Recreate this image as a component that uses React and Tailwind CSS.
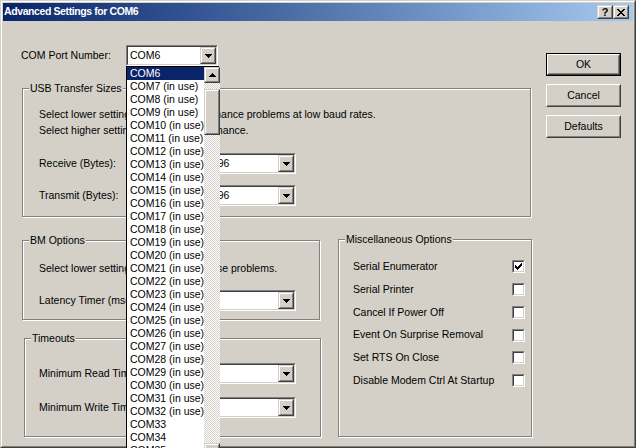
import React from 'react';

// pixel glyphs, one row per entry: [x, length] spans
const ARROW_DOWN = [[[0, 7]], [[1, 5]], [[2, 3]], [[3, 1]]];
const ARROW_UP = [[[3, 1]], [[2, 3]], [[1, 5]], [[0, 7]]];
const CHECK = [[[6, 1]], [[5, 2]], [[0, 1], [4, 3]], [[0, 2], [3, 3]], [[0, 5]], [[1, 3]], [[2, 1]]];
const CLOSE = [
  [[0, 2], [6, 2]],
  [[1, 2], [5, 2]],
  [[2, 4]],
  [[3, 2]],
  [[2, 4]],
  [[1, 2], [5, 2]],
  [[0, 2], [6, 2]],
];

function Pixels({ w, h, rows }) {
  return (
    <svg width={w} height={h} viewBox={`0 0 ${w} ${h}`} shapeRendering="crispEdges" className="block">
      {rows.map((spans, y) =>
        spans.map(([x, len]) => <rect key={`${y}-${x}`} x={x} y={y} width={len} height="1" fill="#000" />)
      )}
    </svg>
  );
}

// scrollbar / caption / combo arrow bevel
function Bevel({ className = '', children }) {
  return (
    <div className={`border border-t-[#d4d0c8] border-l-[#d4d0c8] border-r-[#404040] border-b-[#404040] bg-[#d4d0c8] ${className}`}>
      <div className="w-full h-full border border-t-white border-l-white border-r-[#808080] border-b-[#808080] flex items-center justify-center">
        {children}
      </div>
    </div>
  );
}

function Sunken({ className = '', children }) {
  return (
    <div className={`border border-t-[#808080] border-l-[#808080] border-r-white border-b-white ${className}`}>
      <div className="w-full h-full border border-t-[#404040] border-l-[#404040] border-r-[#d4d0c8] border-b-[#d4d0c8] bg-white">
        {children}
      </div>
    </div>
  );
}

function Combo({ value, className = '' }) {
  return (
    <Sunken className={`h-[21px] shrink-0 ${className}`}>
      <div className="h-full flex items-center">
        <span className="flex-1 pl-[2px] whitespace-nowrap overflow-hidden leading-[13px]">{value}</span>
        <Bevel className="w-[16px] h-[17px] shrink-0">
          <Pixels w={7} h={4} rows={ARROW_DOWN} />
        </Bevel>
      </div>
    </Sunken>
  );
}

function Check({ checked }) {
  return (
    <Sunken className="w-[13px] h-[13px] shrink-0">
      <div className="w-full h-full flex items-center justify-center">
        {checked && <Pixels w={7} h={7} rows={CHECK} />}
      </div>
    </Sunken>
  );
}

function PushButton({ label, isDefault }) {
  if (isDefault) {
    return (
      <div className="w-[75px] h-[23px] border border-black">
        <div className="w-full h-full border border-t-white border-l-white border-r-[#404040] border-b-[#404040]">
          <div className="w-full h-full border border-t-[#d4d0c8] border-l-[#d4d0c8] border-r-[#808080] border-b-[#808080] flex items-center justify-center">
            {label}
          </div>
        </div>
      </div>
    );
  }
  return (
    <div className="w-[75px] h-[23px] border border-t-white border-l-white border-r-[#404040] border-b-[#404040]">
      <div className="w-full h-full border border-t-[#d4d0c8] border-l-[#d4d0c8] border-r-[#808080] border-b-[#808080] flex items-center justify-center">
        {label}
      </div>
    </div>
  );
}

function Group({ title, className = '', children }) {
  return (
    <div className={`relative shrink-0 border border-[#808080] shadow-[inset_1px_1px_0_#fff,1px_1px_0_#fff] ${className}`}>
      <span className="absolute -top-[7px] left-[6px] px-[1px] bg-[#d4d0c8] leading-[13px] whitespace-nowrap">{title}</span>
      {children}
    </div>
  );
}

function FieldRow({ label, value, className = '' }) {
  return (
    <div className={`flex items-center h-[21px] ${className}`}>
      <span className="w-[163px] shrink-0 whitespace-nowrap">{label}</span>
      <Combo value={value} className="w-[94px]" />
    </div>
  );
}

const ports = [
  'COM6',
  ...Array.from({ length: 26 }, (_, i) => `COM${i + 7} (in use)`),
  'COM33',
  'COM34',
  'COM35',
  'COM36',
];

const misc = [
  ['Serial Enumerator', true, 'h-[23px]'],
  ['Serial Printer', false, 'h-[23px]'],
  ['Cancel If Power Off', false, 'h-[23px]'],
  ['Event On Surprise Removal', false, 'h-[22px]'],
  ['Set RTS On Close', false, 'h-[23px]'],
  ['Disable Modem Ctrl At Startup', false, 'h-[23px]'],
];

export default function App() {
  return (
    <div className="w-[636px] h-[448px] relative overflow-hidden bg-[#d4d0c8] text-black text-[10.5px] font-['Liberation_Sans',Arial,sans-serif]">
      {/* window frame */}
      <div className="h-full border border-t-[#d4d0c8] border-l-[#d4d0c8] border-r-[#404040] border-b-[#404040]">
        <div className="h-full border border-t-white border-l-white border-r-[#808080] border-b-[#808080]">
          <div className="h-full p-[1px] flex flex-col">
            {/* title bar */}
            <div className="h-[18px] shrink-0 flex items-center pl-[1px] pr-[4px] bg-linear-to-r from-[#0a246a] to-[#a6caf0]">
              <span className="flex-1 text-white font-bold text-[10.5px] tracking-[-0.4px] whitespace-nowrap">
                Advanced Settings for COM6
              </span>
              <Bevel className="w-[16px] h-[14px]">
                <span className="font-bold text-[11px] leading-[10px]">?</span>
              </Bevel>
              <Bevel className="w-[16px] h-[14px]">
                <Pixels w={8} h={7} rows={CLOSE} />
              </Bevel>
            </div>

            {/* body */}
            <div className="flex-1 flex pl-[18px]">
              <div className="w-[511px] shrink-0 flex flex-col">
                <div className="mt-[24px] h-[21px] flex items-center">
                  <span className="w-[105px] shrink-0">COM Port Number:</span>
                  <Combo value="COM6" className="w-[92px]" />
                </div>

                <Group title="USB Transfer Sizes" className="mt-[22px] ml-[1px] w-[509px] h-[129px] pt-[17px] pl-[16px]">
                  <div className="h-[16px] leading-[16px] whitespace-nowrap">
                    Select lower settings to correct performance problems at low baud rates.
                  </div>
                  <div className="h-[16px] leading-[16px] whitespace-nowrap">
                    Select higher settings for faster performance.
                  </div>
                  <FieldRow label="Receive (Bytes):" value="4096" className="mt-[15px]" />
                  <FieldRow label="Transmit (Bytes):" value="4096" className="mt-[11px]" />
                </Group>

                <div className="mt-[22px] flex items-start">
                  <div className="w-[300px] shrink-0 flex flex-col">
                    <Group title="BM Options" className="mt-[1px] ml-[1px] w-[298px] h-[80px] pt-[19px] pl-[16px]">
                      <div className="h-[16px] leading-[16px] whitespace-nowrap">
                        Select lower settings to correct response problems.
                      </div>
                      <FieldRow label="Latency Timer (msec):" value="16" className="mt-[14px]" />
                    </Group>
                    <Group title="Timeouts" className="mt-[18px] ml-[3px] w-[297px] h-[99px] pt-[24px] pl-[14px]">
                      <FieldRow label="Minimum Read Timeout (msec):" value="0" />
                      <FieldRow label="Minimum Write Timeout (msec):" value="0" className="mt-[13px]" />
                    </Group>
                  </div>

                  <Group title="Miscellaneous Options" className="ml-[17px] w-[194px] h-[198px] pt-[15px] pl-[14px] pr-[6px]">
                    {misc.map(([label, checked, h]) => (
                      <div key={label} className={`flex items-center justify-between ${h}`}>
                        <span className="whitespace-nowrap">{label}</span>
                        <Check checked={checked} />
                      </div>
                    ))}
                  </Group>
                </div>
              </div>

              <div className="ml-[14px] mt-[32px] flex flex-col gap-[8px]">
                <PushButton label="OK" isDefault />
                <PushButton label="Cancel" />
                <PushButton label="Defaults" />
              </div>
            </div>
          </div>
        </div>
      </div>

      {/* open drop-down list of the COM port combo */}
      <div className="absolute left-[126px] top-[66px] w-[93px] h-[400px] border border-black bg-white flex">
        <div className="flex-1 flex flex-col pt-0">
          {ports.map((p, i) => (
            <div
              key={p}
              className={`h-[13px] leading-[13px] pl-[3px] whitespace-nowrap ${i === 0 ? 'bg-[#0a246a] text-white' : ''}`}
            >
              {p}
            </div>
          ))}
        </div>
        <div className="w-[16px] shrink-0 flex flex-col">
          <Bevel className="w-[16px] h-[16px] shrink-0">
            <Pixels w={7} h={4} rows={ARROW_UP} />
          </Bevel>
          <div className="h-[360px] shrink-0 pt-[6px] bg-[image:conic-gradient(#d4d0c8_25%,#fff_0_50%,#d4d0c8_0_75%,#fff_0)] bg-[length:2px_2px]">
            <Bevel className="w-[16px] h-[46px]" />
          </div>
          <Bevel className="w-[16px] h-[16px] shrink-0">
            <Pixels w={7} h={4} rows={ARROW_DOWN} />
          </Bevel>
        </div>
      </div>
    </div>
  );
}
